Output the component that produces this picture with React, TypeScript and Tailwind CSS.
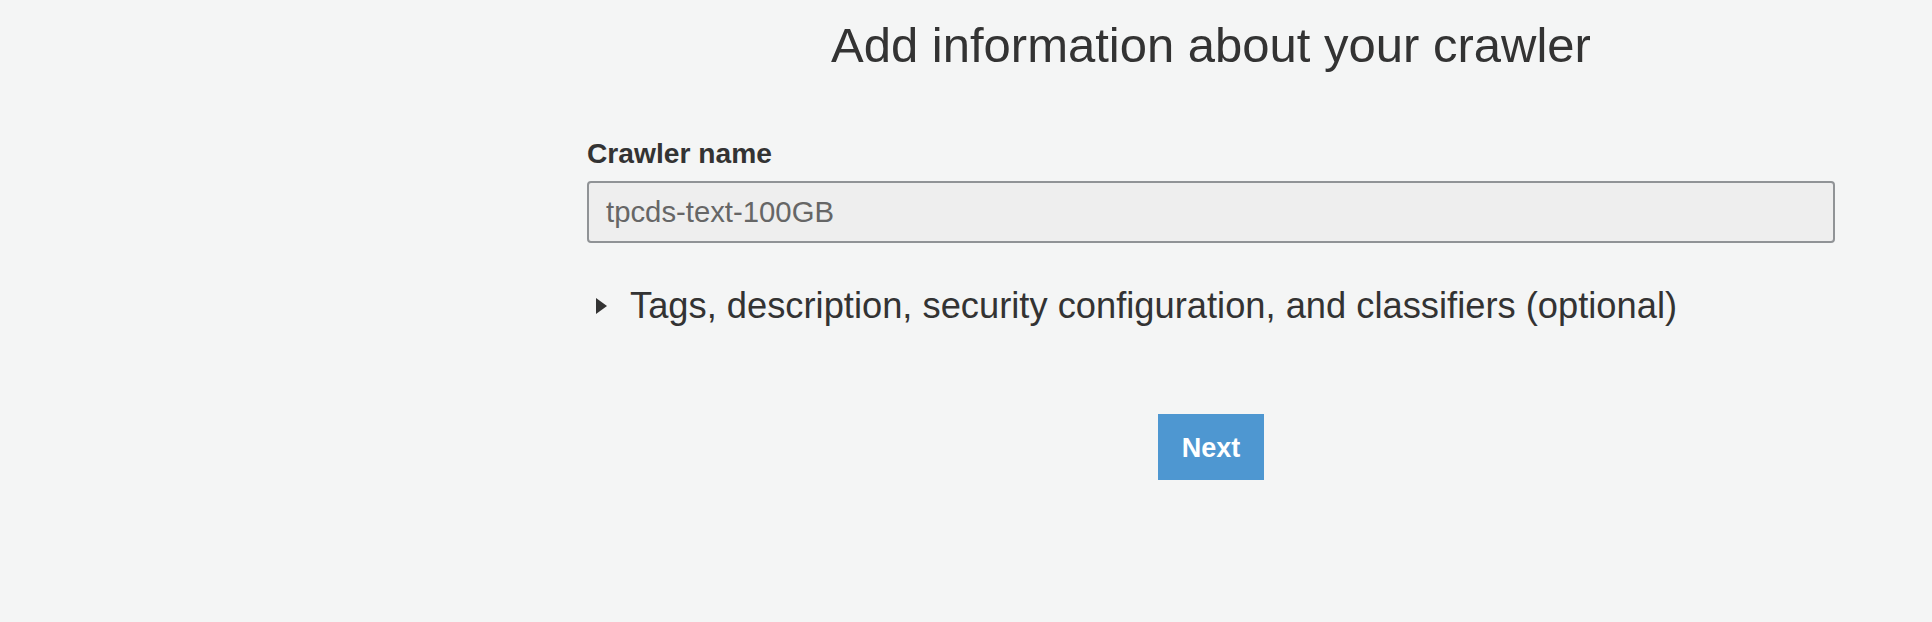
import React from "react";

export default function App() {
  return (
    <div
      className="min-h-[622px] w-full bg-[#f4f5f5] pl-[587px] pr-[97px] text-[#333333]"
      style={{ fontFamily: '"Liberation Sans", Arial, Helvetica, sans-serif' }}
    >
      <h1 className="pt-[17px] text-center text-[49px] leading-[56px] font-normal text-[#333333]">
        Add information about your crawler
      </h1>

      <div className="mt-[64px]">
        <label className="block text-[28.2px] leading-[32px] font-bold text-[#333333]">
          Crawler name
        </label>
        <div className="mt-[12px] flex h-[62px] items-center rounded-[4px] border-2 border-[#909396] bg-[#eeeeee] pl-[17px]">
          <span className="text-[29.3px] leading-[58px] text-[#666666]">tpcds-text-100GB</span>
        </div>
      </div>

      <div className="mt-[43px] flex h-[40px] items-center">
        <svg width="11" height="16" viewBox="0 0 11 16" className="ml-[9px] shrink-0">
          <polygon points="0,0 11,8 0,16" fill="#333333" />
        </svg>
        <span className="ml-[23px] text-[36.3px] leading-[40px] text-[#333333]">
          Tags, description, security configuration, and classifiers (optional)
        </span>
      </div>

      <div className="mt-[88px] flex justify-center">
        <button className="flex h-[66px] w-[106px] items-center justify-center bg-[#4e97d1] pt-[2px] text-[27px] leading-[30px] font-bold text-white">
          Next
        </button>
      </div>
    </div>
  );
}
